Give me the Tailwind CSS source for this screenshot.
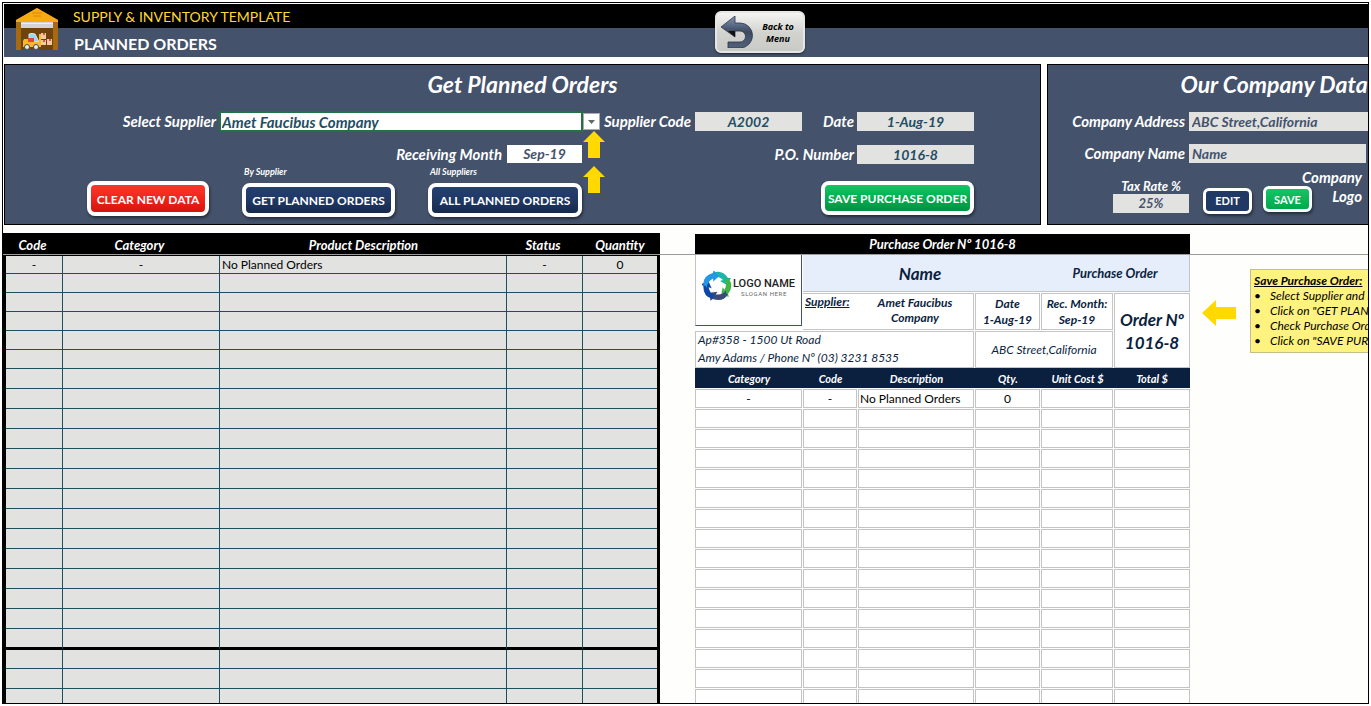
<!DOCTYPE html>
<html lang="en">
<head>
<meta charset="utf-8">
<title>Planned Orders</title>
<script src="https://cdn.jsdelivr.net/npm/@tailwindcss/browser@4"></script>
</head>
<body class="h-screen overflow-hidden bg-white p-[2px] font-[Lato,sans-serif] text-black">
<div class="relative h-full overflow-hidden border border-black bg-[#fefefc]">

  <header class="relative mt-px ml-px">
    <div class="flex h-6 items-center bg-black pt-px pl-[69px] text-sm text-[#ffd92e]">SUPPLY &amp; INVENTORY TEMPLATE</div>
    <div class="flex h-[29px] items-center bg-[#44526b] pt-[2px] pl-[70px] text-base font-bold text-white"><h1>PLANNED ORDERS</h1></div>
    <svg class="absolute top-1 left-3 h-[43px] w-[42px]" viewBox="0 0 42 43" aria-hidden="true">
      <path d="M0 12 21 0 42 12V42H0z" fill="#a86a10"/>
      <path d="M0 12 21 0 42 12V14H0z" fill="#f9a912"/>
      <path d="M16 5h10M17 8h8" stroke="#d98a08" stroke-width="1"/>
      <rect x="5" y="14" width="32" height="28" fill="#6f430c"/>
      <rect x="5" y="14" width="32" height="6" fill="#d5d3da"/>
      <path d="M5 15.500h32" stroke="#efedf2"/>
      <path d="M13 34V26q3-1 6 0l4 8z" fill="#9fd3ee" stroke="#d9ecf4"/>
      <path d="M8 31h7l1 3h7v-8h2v13H7v-6z" fill="#fbb924"/>
      <path d="M12 30h6v4h-6z" fill="#e0483a"/>
      <circle cx="11" cy="39" r="2.500" fill="#e8eef2" stroke="#4d4a55"/>
      <circle cx="20" cy="39" r="2.500" fill="#e8eef2" stroke="#4d4a55"/>
      <path d="M25 25h5v6h-5zM25 32h5v5h-5zM31 31h5v6h-5z" fill="#f3c9a3"/>
      <path d="M27 25h2v2h-2zM27 32h2v2h-2zM33 31h2v2h-2z" fill="#e2523d"/>
    </svg>
    <button class="absolute top-[7px] left-[711px] flex h-[42px] w-[90px] items-center rounded-md border-2 border-[#e6e6e4] bg-linear-to-b from-[#f4f4f2] via-[#d3d3d0] to-[#c9c9c6] pl-1 shadow-[0_1px_2px_#0008]">
      <svg class="h-8 w-8 shrink-0" viewBox="0 0 32 32" aria-hidden="true">
        <defs><linearGradient id="bk" x1="0" y1="0" x2="0" y2="1"><stop offset="0" stop-color="#8196b3"/><stop offset=".5" stop-color="#3c4a61"/><stop offset="1" stop-color="#53627b"/></linearGradient></defs>
        <path d="M0 11 14 0V7h5a12.500 12.500 0 0 1 0 25H7v-6h12a5.500 5.500 0 0 0 0-11H14v6z" fill="url(#bk)" stroke="#2c3646" stroke-width=".8"/>
        <path d="M7 15h7v6z" fill="#111"/>
      </svg>
      <span class="flex-1 pt-px text-center font-['Open_Sans',sans-serif] text-[9px] leading-3 font-bold italic">Back to<br>Menu</span>
    </button>
  </header>

  <div class="mt-[7px] ml-px flex gap-[6px] font-bold text-white italic">
    <section class="relative h-[161px] w-[1037px] shrink-0 border border-black bg-[#44526b]">
      <h2 class="h-[38px] text-center text-[23px] leading-[38px]">Get Planned Orders</h2>
      <div class="mt-[9px] flex h-[19px] items-center text-[15px] leading-[19px]">
        <label for="sup" class="mr-[3px] w-[211px] text-right">Select Supplier</label>
        <select id="sup" class="h-[21px] w-[364px] appearance-none border-2 border-[#217346] bg-white pl-px leading-4 text-[#1f4e63]"><option>Amet Faucibus Company</option></select>
        <button aria-label="Open supplier list" class="flex h-[17px] w-[17px] items-center justify-center border border-[#ababab] bg-white"><svg class="h-1 w-[7px]" viewBox="0 0 7 4"><path d="M0 0h7L3.500 4z" fill="#666"/></svg></button>
        <label for="code" class="mr-1 w-[91px] text-right whitespace-nowrap">Supplier Code</label>
        <output id="code" class="h-[19px] w-[107px] bg-[#e2e2e1] text-center text-sm leading-[19px] text-[#1f4e63]">A2002</output>
        <label for="date" class="mr-[3px] w-[52px] text-right">Date</label>
        <output id="date" class="h-[19px] w-[117px] bg-[#e2e2e1] text-center text-sm leading-[19px] text-[#1f4e63]">1-Aug-19</output>
      </div>
      <div class="mt-[14px] flex h-[18px] items-center text-[15px] leading-[18px]">
        <label for="rec" class="mr-[5px] w-[497px] text-right">Receiving Month</label>
        <input id="rec" value="Sep-19" class="h-[18px] w-[75px] bg-white text-center text-sm text-[#44526b]">
        <label for="po" class="mr-[3px] w-[272px] text-right">P.O. Number</label>
        <output id="po" class="h-[19px] w-[117px] bg-[#e2e2e1] text-center text-sm leading-[19px] text-[#1f4e63]">1016-8</output>
      </div>
      <div class="mt-[2px] flex items-start">
        <button class="mt-4 ml-[82px] h-[35px] w-[122px] rounded-lg border-4 border-white bg-linear-to-b from-[#f5392c] via-[#f3221a] to-[#d3140e] pt-[2px] text-xs font-bold not-italic shadow-[1px_2px_3px_#0007]">CLEAR NEW DATA</button>
        <div class="ml-[33px]">
          <p class="h-[14px] pl-[2px] text-[9px] leading-[14px]">By Supplier</p>
          <button class="mt-[4px] h-[34px] w-[153px] rounded-lg border-4 border-white bg-linear-to-b from-[#243f72] via-[#1f3864] to-[#172a4c] pt-px text-xs font-bold not-italic shadow-[1px_2px_3px_#0007]">GET PLANNED ORDERS</button>
        </div>
        <div class="ml-[33px]">
          <p class="h-[14px] pl-[2px] text-[9px] leading-[14px]">All Suppliers</p>
          <button class="mt-[4px] h-[34px] w-[154px] rounded-lg border-4 border-white bg-linear-to-b from-[#243f72] via-[#1f3864] to-[#172a4c] pt-px text-xs font-bold not-italic shadow-[1px_2px_3px_#0007]">ALL PLANNED ORDERS</button>
        </div>
        <button class="mt-4 ml-[239px] h-[34px] w-[153px] rounded-lg border-4 border-white bg-linear-to-b from-[#14c565] via-[#00b050] to-[#009242] pt-px text-xs font-bold whitespace-nowrap not-italic shadow-[1px_2px_3px_#0007]">SAVE PURCHASE ORDER</button>
      </div>
      <svg class="absolute top-[66px] left-[578px] h-[27px] w-[22px]" viewBox="0 0 22 27" aria-hidden="true"><path d="M11 0 22 11H17V27H5V11H0z" fill="#ffd900"/></svg>
      <svg class="absolute top-[101px] left-[578px] h-[27px] w-[22px]" viewBox="0 0 22 27" aria-hidden="true"><path d="M11 0 22 11H17V27H5V11H0z" fill="#ffd900"/></svg>
    </section>

    <section class="h-[161px] w-[454px] shrink-0 border border-black bg-[#44526b]">
      <h2 class="h-[38px] text-center text-[23px] leading-[38px]">Our Company Data</h2>
      <div class="mt-[9px] flex h-[19px] items-center text-[15px] leading-[19px]">
        <label for="addr" class="mr-1 w-[137px] text-right">Company Address</label>
        <input id="addr" value="ABC Street,California" class="h-[19px] w-[240px] bg-[#e2e2e1] pl-[3px] text-sm text-[#44526b]">
      </div>
      <div class="mt-[13px] flex h-[19px] items-center text-[15px] leading-[19px]">
        <label for="nm" class="mr-1 w-[137px] text-right">Company Name</label>
        <input id="nm" value="Name" class="h-[19px] w-[177px] bg-[#e2e2e1] pl-[3px] text-sm text-[#44526b]">
      </div>
      <div class="flex items-start">
        <div class="mt-[15px] ml-[65px] w-[76px] text-center">
          <label for="tax" class="block h-4 text-[13px] leading-4">Tax Rate %</label>
          <input id="tax" value="25%" class="block h-[19px] w-[76px] bg-[#e2e2e1] pt-px text-center text-[13px] text-[#44526b]">
        </div>
        <button class="mt-[25px] ml-[14px] h-[26px] w-[49px] rounded-md border-3 border-white bg-[#1f3864] pt-px text-[11px] font-bold not-italic shadow-[1px_2px_3px_#0007]">EDIT</button>
        <button class="mt-[23px] ml-[11px] h-[26px] w-[49px] rounded-md border-3 border-white bg-linear-to-b from-[#14c565] to-[#00a84c] pt-[2px] text-[11px] font-bold not-italic shadow-[1px_2px_3px_#0007]">SAVE</button>
        <p class="mt-[5px] w-[50px] text-right text-[15px] leading-[19px]"><span class="float-right">Company</span><br>Logo</p>
      </div>
    </section>
  </div>

  <div class="relative mt-2 flex items-start">
    <div class="pointer-events-none absolute inset-x-0 top-[21px] z-10 h-px bg-[#9c9c9c]"></div>

    <table class="w-[657px] shrink-0 table-fixed border-separate border-spacing-0 border-x-3 border-black bg-[#e2e2e1] text-xs">
      <colgroup><col class="w-[57px]"><col class="w-[157px]"><col class="w-[287px]"><col class="w-[76px]"><col class="w-[74px]"></colgroup>
      <thead><tr class="h-[23px] bg-black text-[13px] leading-4 font-bold text-white italic"><th class="pr-1">Code</th><th class="pr-1">Category</th><th>Product Description</th><th class="pr-1">Status</th><th>Quantity</th></tr></thead>
      <tbody id="plan"></tbody>
    </table>

    <div class="mt-px ml-[35px] w-[496px] shrink-0 text-[#0b1f3f]">
      <h3 class="mr-px h-[21px] bg-black text-center text-[13px] leading-[21px] font-bold text-white italic">Purchase Order Nº 1016-8</h3>
      <div class="grid grid-cols-[107px_54px_116px_65px_72px_76px] grid-rows-[37px_37px_37px] gap-px bg-white text-xs leading-4 font-bold italic">
        <div class="row-span-2 mb-1 flex items-center justify-center gap-px border-r border-b border-l border-[#44526b] border-l-[#c4c4c4] bg-white pb-2 not-italic">
          <svg class="h-[30px] w-[30px] shrink-0" viewBox="-15 -15 30 30" aria-hidden="true">
            <g id="blades"></g>
          </svg>
          <div class="pt-1 text-center whitespace-nowrap">
            <p class="font-[Roboto,sans-serif] text-[11px] leading-3 font-medium text-[#222]">LOGO NAME</p>
            <p class="font-[Roboto,sans-serif] text-[6px] leading-2 font-normal tracking-widest text-[#666]">SLOGAN HERE</p>
          </div>
        </div>
        <div class="col-span-5 flex items-center border-r border-b border-[#c4c4c4] bg-[#e7eefb]">
          <p class="w-[234px] pt-[2px] text-center text-[17px]">Name</p><p class="flex-1 pl-1 text-center text-[13px]">Purchase Order</p>
        </div>
        <div class="col-span-2 flex border border-l-0 border-[#c4c4c4]"><p class="w-[54px] pl-[2px] underline">Supplier:</p><p class="flex-1 pt-px text-center leading-[15px]">Amet Faucibus<br>Company</p></div>
        <div class="border border-[#c4c4c4] pt-[2px] text-center">Date<br>1-Aug-19</div>
        <div class="border border-[#c4c4c4] pt-[2px] text-center whitespace-nowrap">Rec. Month:<br>Sep-19</div>
        <div class="row-span-2 flex items-center justify-center border border-[#c4c4c4] text-center text-[17px] leading-[23px] whitespace-nowrap">Order Nº<br>1016-8</div>
        <div class="col-span-3 flex items-center border border-[#c4c4c4] pb-px pl-[2px] leading-[18px] font-normal"><p>Ap#358 - 1500 Ut Road<br>Amy Adams / Phone Nº (03) 3231 8535</p></div>
        <div class="col-span-2 flex items-center justify-center border border-[#c4c4c4] font-normal">ABC Street,California</div>
      </div>
      <table class="w-[496px] table-fixed border-separate border-spacing-0 text-xs text-black">
        <colgroup><col class="w-[108px]"><col class="w-[55px]"><col class="w-[117px]"><col class="w-[66px]"><col class="w-[73px]"><col class="w-[77px]"></colgroup>
        <thead><tr class="h-[20px] text-[11px] leading-4 text-white italic"><th class="bg-[#0b1f3f] pt-[2px]">Category</th><th class="bg-[#0b1f3f] pt-[2px]">Code</th><th class="bg-[#0b1f3f] pt-[2px]">Description</th><th class="bg-[#0b1f3f] pt-[2px]">Qty.</th><th class="bg-[#0b1f3f] pt-[2px]">Unit Cost $</th><th class="border-r border-white bg-[#0b1f3f] pt-[2px]">Total $</th></tr></thead>
        <tbody id="order"></tbody>
      </table>
    </div>

    <svg class="mt-[67px] ml-[11px] h-[26px] w-[34px] shrink-0" viewBox="0 0 34 26" aria-hidden="true"><path d="M0 13 14 0V7H34V19H14V26z" fill="#ffd900"/></svg>
    <aside class="mt-9 ml-[14px] h-[84px] w-[260px] shrink-0 border border-[#c3bf8a] bg-[#fff380] pt-[3px] pl-[3px] text-xs leading-[15px] whitespace-nowrap italic">
      <p class="font-bold underline">Save Purchase Order:</p>
      <ul>
        <li class="flex"><span class="w-4 shrink-0 not-italic" aria-hidden="true">•</span>Select Supplier and Receiving Month</li>
        <li class="flex"><span class="w-4 shrink-0 not-italic" aria-hidden="true">•</span>Click on "GET PLANNED ORDERS"</li>
        <li class="flex"><span class="w-4 shrink-0 not-italic" aria-hidden="true">•</span>Check Purchase Order</li>
        <li class="flex"><span class="w-4 shrink-0 not-italic" aria-hidden="true">•</span>Click on "SAVE PURCHASE ORDER"</li>
      </ul>
    </aside>
  </div>
</div>

<script>
  const plan = document.getElementById('plan');
  const first = ['-', '-', 'No Planned Orders', '-', '0'];
  for (let r = 0; r < 24; r++) {
    const tr = document.createElement('tr');
    tr.className = r === 0 ? 'h-[18px]' : r < 6 ? 'h-[19px]' : r === 19 ? 'h-[21px]' : r === 20 ? 'h-[19px]' : 'h-[20px]';
    for (let c = 0; c < 5; c++) {
      const td = document.createElement('td');
      td.className = (r === 19 ? 'border-b-3 border-b-black ' : 'border-b border-b-[#1f4e5f] ') +
        (c < 4 ? 'border-r border-r-[#1f4e5f] ' : '') + (c === 2 ? 'p-0 pl-[2px] text-left leading-4' : 'p-0 text-center leading-4');
      if (r === 0) td.textContent = first[c];
      tr.append(td);
    }
    plan.append(tr);
  }
  const order = document.getElementById('order');
  const item = ['-', '-', 'No Planned Orders', '0', '', ''];
  for (let r = 0; r < 18; r++) {
    const tr = document.createElement('tr');
    for (let c = 0; c < 6; c++) {
      const td = document.createElement('td');
      td.className = 'p-0 pt-px pr-px';
      const box = document.createElement('div');
      box.className = c === 2
        ? 'h-[19px] border border-[#c4c4c4] bg-white pl-px text-xs leading-[18px] whitespace-nowrap'
        : 'h-[19px] border border-[#c4c4c4] bg-white text-center text-xs leading-[18px]';
      if (r === 0) box.textContent = item[c];
      td.append(box);
      tr.append(td);
    }
    order.append(tr);
  }
  const colors = ['#1fb5a6', '#3fb54a', '#3b4a78', '#0d47a8', '#2499e3'];
  document.getElementById('blades').innerHTML = colors.map((c, i) =>
    `<path transform="rotate(${i * 72})" d="M-4-13Q5-17 11-8L14-8 10-1 3-5 6-6Q1-11-5-9Q-2-11-4-13z" fill="${c}"/>`).join('');
</script>
</body>
</html>
